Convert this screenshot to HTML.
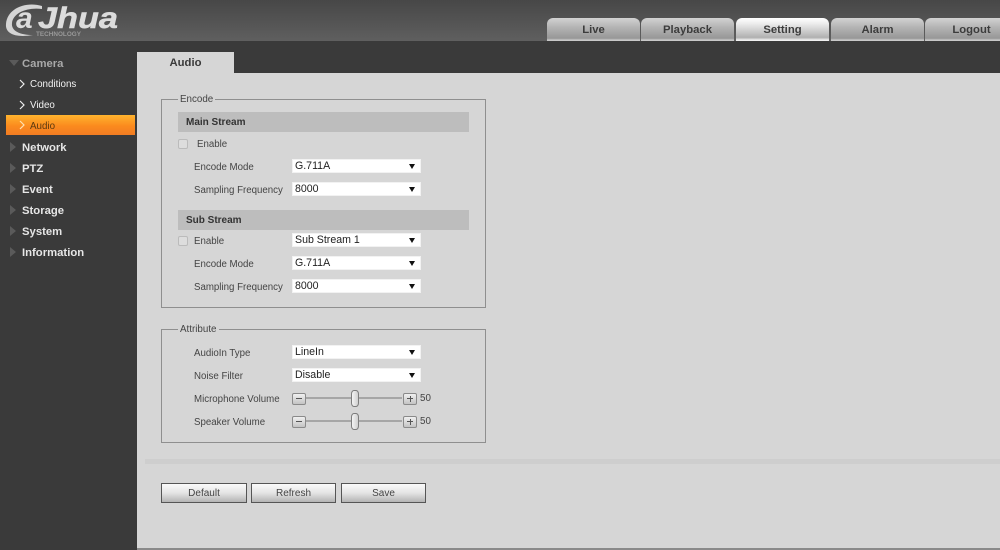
<!DOCTYPE html>
<html><head><meta charset="utf-8"><style>
html,body{margin:0;padding:0}
body{width:1000px;height:550px;position:relative;overflow:hidden;background:#d6d6d6;font-family:"Liberation Sans",Arial,sans-serif}
div,span{position:absolute;white-space:nowrap}
.hdr{left:0;top:0;width:1000px;height:41px;background:linear-gradient(#474747,#5f5f5f)}
.side{left:0;top:41px;width:137px;height:509px;background:#3a3a3a}
.bar{left:137px;top:41px;width:863px;height:32px;background:#3a3a3a}
.tab{top:18px;height:23px;width:93px;border-radius:6px 6px 0 0;background:linear-gradient(#d2d2d2,#b4b4b4 40%,#979797 88%,#c8c8c8 96%);text-align:center;font-weight:bold;font-size:11.3px;line-height:24px;color:#3c3c3c}
.tab.on{background:linear-gradient(#fff,#ececec 25%,#b0b0b0 85%,#f0f0f0 96%)}
.m{left:22px;font-size:11.3px;font-weight:bold;color:#e6e6e6;line-height:14px}
.tri{left:10px;width:0;height:0;border-left:6px solid #5a5a5a;border-top:5px solid transparent;border-bottom:5px solid transparent}
.s{left:30px;font-size:9.8px;color:#f2f2f2;line-height:12px}
.fs{left:161px;width:323px;border:1px solid #8f8f8f}
.lg{background:#d6d6d6;font-size:9.8px;color:#444;line-height:12px;padding:0 2px;left:178px}
.hd{left:178px;width:291px;height:20px;background:#bdbdbd;font-size:10px;font-weight:bold;color:#333;line-height:22px;text-indent:8px}
.l{font-size:9.7px;color:#444;line-height:12px}
.sel{left:292px;width:129px;height:14px;background:#fff;box-shadow:inset 0 0 0 1px #f2f2f2;font-size:10.6px;color:#222;line-height:14px;text-indent:3px}
.sel i{position:absolute;right:6px;top:5px;width:0;height:0;border-left:3px solid transparent;border-right:3px solid transparent;border-top:5px solid #111}
.cb{left:178px;width:8px;height:8px;background:#ddd;border:1px solid #bbb;border-radius:2px}
.track{left:306px;width:96px;height:2px;background:#a6a6a6}
.sb{width:12px;height:10px;border:1px solid #8a8a8a;border-radius:2px;background:linear-gradient(#f0f0f0,#c4c4c4)}
.sb:before{content:"";position:absolute;left:3px;top:4px;width:6px;height:1px;background:#555}
.sb.p:after{content:"";position:absolute;left:5.5px;top:2px;width:1px;height:6px;background:#555}
.th{left:351px;width:6px;height:15px;border:1px solid #7d7d7d;border-radius:3px/4px;background:linear-gradient(90deg,#f4f4f4,#d0d0d0)}
.n{left:420px;font-size:9.8px;color:#444;line-height:12px}
.btn{top:483px;height:18px;border:1px solid #555;background:linear-gradient(#fafafa,#e4e4e4 50%,#b4b4b4);text-align:center;font-size:10px;line-height:19px;color:#444}
</style></head><body>
<div class="hdr"></div>
<svg style="position:absolute;left:0;top:0" width="130" height="42" viewBox="0 0 130 42">
<path d="M42 6C25 1 7 9 6 24C5 34 16 38 33 35C20 35 11 31 12 23C13 13 27 7 42 9Z" fill="#d4d4d4"/>
<text x="16" y="28" font-family="Liberation Sans" font-size="30" font-weight="bold" font-style="italic" fill="#dcdcdc">a</text>
<text x="38" y="28" font-family="Liberation Sans" font-size="30" font-weight="bold" font-style="italic" fill="#dcdcdc" stroke="#dcdcdc" stroke-width=".5" textLength="80" lengthAdjust="spacingAndGlyphs">Jhua</text>
<text x="36" y="36" font-family="Liberation Sans" font-size="6" font-weight="bold" fill="#999" textLength="45" lengthAdjust="spacingAndGlyphs">TECHNOLOGY</text>
</svg>
<div class="tab" style="left:547px">Live</div>
<div class="tab" style="left:641px">Playback</div>
<div class="tab on" style="left:736px">Setting</div>
<div class="tab" style="left:831px">Alarm</div>
<div class="tab" style="left:925px">Logout</div>
<div class="side"></div>
<div class="bar"></div>

<div style="left:9px;top:60px;width:0;height:0;border-top:6px solid #5a5a5a;border-left:5px solid transparent;border-right:5px solid transparent"></div>
<div class="m" style="top:57px;color:#a8a8a8">Camera</div>
<svg style="position:absolute;left:18px;top:79px" width="8" height="10"><path d="M2 1L6 5L2 9" fill="none" stroke="#eee" stroke-width="1.2"/></svg>
<div class="s" style="top:79px">Conditions</div>
<svg style="position:absolute;left:18px;top:100px" width="8" height="10"><path d="M2 1L6 5L2 9" fill="none" stroke="#eee" stroke-width="1.2"/></svg>
<div class="s" style="top:100px">Video</div>
<div style="left:6px;top:115px;width:129px;height:20px;background:linear-gradient(#ffb42e,#fb8a1e 55%,#f27c22)"></div>
<svg style="position:absolute;left:18px;top:120px" width="8" height="10"><path d="M2 1L6 5L2 9" fill="none" stroke="#ffe0b0" stroke-width="1.2"/></svg>
<div class="s" style="top:121px;color:#5a3a10">Audio</div>

<div class="tri" style="top:142px"></div><div class="m" style="top:141px">Network</div>
<div class="tri" style="top:163px"></div><div class="m" style="top:162px">PTZ</div>
<div class="tri" style="top:184px"></div><div class="m" style="top:183px">Event</div>
<div class="tri" style="top:205px"></div><div class="m" style="top:204px">Storage</div>
<div class="tri" style="top:226px"></div><div class="m" style="top:225px">System</div>
<div class="tri" style="top:247px"></div><div class="m" style="top:246px">Information</div>

<div style="left:137px;top:52px;width:97px;height:21px;background:#d6d6d6;text-align:center;font-size:11.3px;font-weight:bold;color:#3a3a3a;line-height:23px">Audio</div>

<div class="fs" style="top:99px;height:207px"></div>
<div class="lg" style="top:94px">Encode</div>
<div class="hd" style="top:112px">Main Stream</div>
<div class="cb" style="top:139px"></div>
<div class="l" style="left:197px;top:139px">Enable</div>
<div class="l" style="left:194px;top:162px">Encode Mode</div>
<div class="sel" style="top:159px">G.711A<i></i></div>
<div class="l" style="left:194px;top:185px">Sampling Frequency</div>
<div class="sel" style="top:182px">8000<i></i></div>

<div class="hd" style="top:210px">Sub Stream</div>
<div class="cb" style="top:236px"></div>
<div class="l" style="left:194px;top:236px">Enable</div>
<div class="sel" style="top:233px">Sub Stream 1<i></i></div>
<div class="l" style="left:194px;top:259px">Encode Mode</div>
<div class="sel" style="top:256px">G.711A<i></i></div>
<div class="l" style="left:194px;top:282px">Sampling Frequency</div>
<div class="sel" style="top:279px">8000<i></i></div>

<div class="fs" style="top:329px;height:112px"></div>
<div class="lg" style="top:324px">Attribute</div>
<div class="l" style="left:194px;top:348px">AudioIn Type</div>
<div class="sel" style="top:345px">LineIn<i></i></div>
<div class="l" style="left:194px;top:371px">Noise Filter</div>
<div class="sel" style="top:368px">Disable<i></i></div>
<div class="l" style="left:194px;top:394px">Microphone Volume</div>
<div class="track" style="top:397px"></div>
<div class="sb" style="left:292px;top:393px"></div>
<div class="sb p" style="left:403px;top:393px"></div>
<div class="th" style="top:390px"></div>
<div class="n" style="top:393px">50</div>
<div class="l" style="left:194px;top:417px">Speaker Volume</div>
<div class="track" style="top:420px"></div>
<div class="sb" style="left:292px;top:416px"></div>
<div class="sb p" style="left:403px;top:416px"></div>
<div class="th" style="top:413px"></div>
<div class="n" style="top:416px">50</div>

<div style="left:145px;top:459px;width:855px;height:5px;background:#cecece"></div>
<div class="btn" style="left:161px;width:84px">Default</div>
<div class="btn" style="left:251px;width:83px">Refresh</div>
<div class="btn" style="left:341px;width:83px">Save</div>
<div style="left:137px;top:548px;width:863px;height:2px;background:#8a8a8a"></div>
</body></html>
